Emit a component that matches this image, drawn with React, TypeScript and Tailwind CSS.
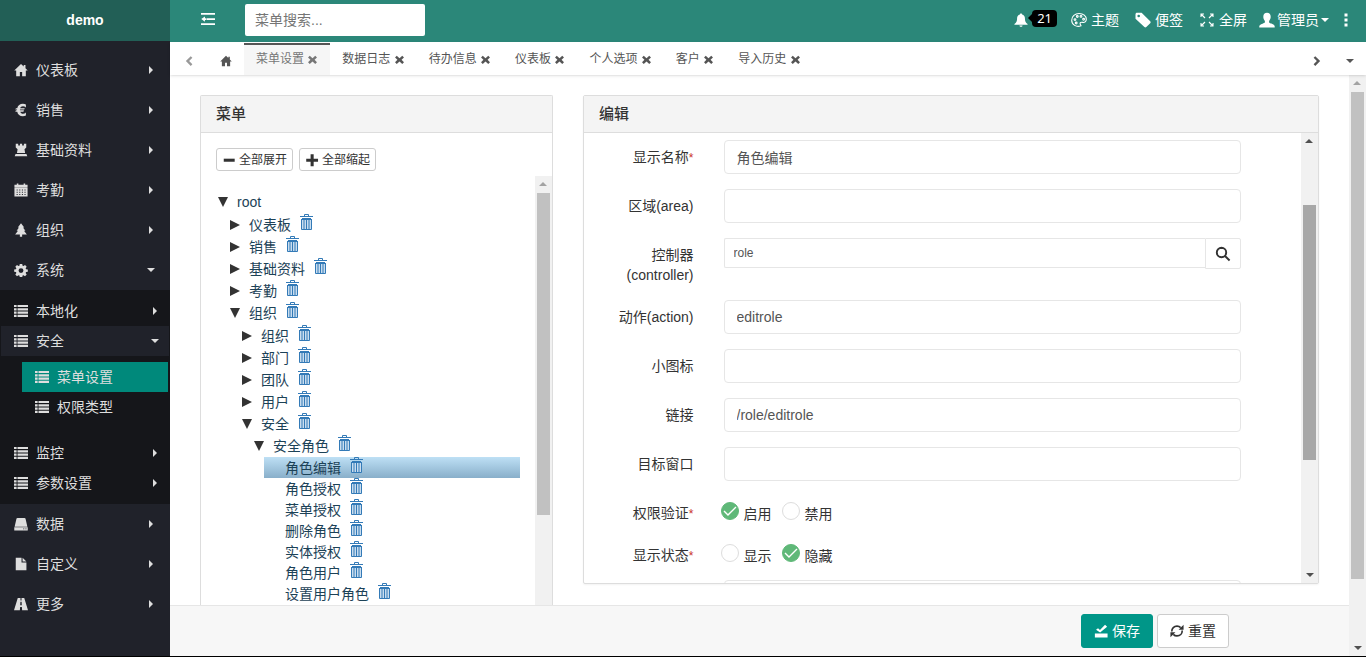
import { useState } from "react";
import type { ReactNode } from "react";
import clsx from "clsx";

const icons: Record<string, ReactNode> = {
  home: (
    <path d="M8 1 .3 8.6h2.2V15h4.2v-4.6h2.6V15h4.2V8.6h2.2l-2.600-2.500V2.400h-2v1.700z" />
  ),
  euro: (
    <path d="M13.6 1.8v3.4c-1-1-2.2-1.5-3.4-1.5-1.6 0-2.7.8-3.1 2.2h5.2l-.6 1.5H6.8v1h4.6l-.6 1.5H7.2c.5 1.5 1.6 2.4 3.2 2.4 1.2 0 2.3-.5 3.2-1.4v3.3c-1 .6-2.2.9-3.5.9-3.4 0-5.8-2-6.4-5.2H1.500l.7-1.5h1.300v-1h-2l.7-1.5h1.500C4.400 2.900 6.800.9 10.200.9c1.300 0 2.500.3 3.400.9z" />
  ),
  tower: (
    <path d="M2 .8h2.800v2h2V.8h2.500v2h2V.8H14v4.400L12 7l.7 4.500H3.400L4.100 7 2 5.200zM1.800 12.500h12.400l1 2.700H.8z" />
  ),
  calendar: (
    <path
      fillRule="evenodd"
      d="M.5 2h2.700V.5H5V2h6V.5h1.800V2h2.700v3H.5zM.5 5.500h15v10H.5zM3 7.500v1h1.200v-1zm3 0v1h1.200v-1zm3 0v1h1.200v-1zm3 0v1h1.200v-1zM3 10v1h1.200v-1zm3 0v1h1.200v-1zm3 0v1h1.200v-1zm3 0v1h1.200v-1zm-9 2.600v1h1.200v-1zm3 0v1h1.200v-1zm3 0v1h1.200v-1zm3 0v1h1.200v-1z"
    />
  ),
  tree: <path d="M8 .3 4.300 5.200h1.400L3 8.800h1.600L1.300 13h5.400v2.700h2.600V13h5.400l-3.300-4.200H13l-2.700-3.600h1.400z" />,
  cog: (
    <path
      fillRule="evenodd"
      d="M6.600 1h2.800l.4 2 1.100.5 1.700-1.200 1.900 1.900-1.200 1.700.5 1.100 2 .4v2.600l-2 .4-.5 1.100 1.200 1.700-1.900 1.900-1.700-1.200-1.100.5-.4 2H6.600l-.4-2-1.100-.5-1.700 1.200-1.900-1.900 1.200-1.700-.5-1.100-2-.4V7.400l2-.4.5-1.100-1.200-1.700 1.900-1.900 1.700 1.200L6.200 3zM8 5.900a2.800 2.800 0 1 0 0 5.600 2.800 2.800 0 0 0 0-5.600z"
    />
  ),
  list: (
    <path d="M0 1h3v2.500H0zM4 1h12v2.500H4zM0 4.800h3v2.500H0zM4 4.800h12v2.500H4zM0 8.600h3v2.500H0zM4 8.600h12v2.500H4zM0 12.400h3v2.500H0zM4 12.400h12v2.500H4z" />
  ),
  hdd: (
    <path
      fillRule="evenodd"
      d="M4 1h8c.7 0 1 .3 1.200.9L15.300 11H.7L2.800 1.900C3 1.300 3.300 1 4 1zM.3 11.700h15.400v3.600H.3zM10.500 13v1h1.300v-1zm2.500 0v1h1.300v-1z"
    />
  ),
  file: <path d="M2 .8h6.600v5.400h5.600v9H2zM9.800.8l4.400 4.300H9.800z" />,
  road: (
    <path d="M4.300 1h3.100v3h1.200V1h3.100L16 15H9.300l-.3-3.600H7L6.700 15H0zM7.300 5.500 7.100 9.500h1.800l-.2-4z" fillRule="evenodd" />
  ),
  bell: (
    <path d="M8 .5c.9 0 1.300.6 1.300 1.300 2.100.6 3.200 2.300 3.200 4.500 0 3.200.8 4.600 3 6.300v.8H.5v-.8c2.200-1.700 3-3.100 3-6.300 0-2.200 1.100-3.900 3.200-4.500C6.700 1.100 7.100.5 8 .5zM6.200 14.200h3.600c0 1-.8 1.600-1.800 1.600s-1.800-.6-1.800-1.600z" />
  ),
  tag: (
    <path
      fillRule="evenodd"
      d="M.5 2.200c0-.9.6-1.500 1.500-1.500h4.600L15.200 9.300c.6.6.6 1.300 0 1.900l-3.900 3.900c-.6.6-1.300.6-1.900 0L.5 6.800zM3.700 2.700a1.300 1.300 0 1 0 0 2.600 1.300 1.300 0 0 0 0-2.600z"
    />
  ),
  user: (
    <path d="M8 .8c2.300 0 3.700 1.600 3.700 4 0 1.600-.6 3.200-1.600 4.100v1.500c.4.800 5.400 1.600 5.600 3.800v1.300H.3v-1.300c.2-2.200 5.200-3 5.600-3.800V8.900C4.900 8 4.300 6.400 4.300 4.800c0-2.400 1.400-4 3.700-4z" />
  ),
  palette: (
    <g fill="none" stroke="currentColor" strokeWidth="1.1">
      <path d="M10 13.800c-4.600 1.700-9.300-1-9.300-5.600C.7 4.200 4 1.500 8.100 1.500c4.200 0 7.200 2.500 7.200 5.700 0 2.400-1.800 3.700-3.600 3.200-1.600-.4-2.900.2-2.600 1.500.2.800.9 1 .9 1.900z" />
      <circle cx="4" cy="7.600" r=".9" />
      <circle cx="6.300" cy="4.500" r=".9" />
      <circle cx="10" cy="4.400" r=".9" />
      <circle cx="12.600" cy="7.300" r=".9" />
      <circle cx="5.200" cy="11" r=".9" />
    </g>
  ),
  fullscreen: (
    <path
      d="M5 2H2v3M2 2l4 4M11 2h3v3M14 2l-4 4M2 11v3h3M2 14l4-4M14 11v3h-3M14 14l-4-4"
      fill="none"
      stroke="currentColor"
      strokeWidth="1.1"
    />
  ),
  outdent: (
    <path d="M0 1.200h16v2H0zM6.500 7h9.500v2H6.500zM0 12.800h16v2H0zM.3 8l4.200-3v2H6v2H4.500v2z" />
  ),
  remove: <path d="M4 2.500 8 6l4-3.500L14.500 5 11 8.500l3.500 3.500-2.500 2.500L8 11l-4 3.500L1.500 12 5 8.500 1.500 5z" />,
  left: <path d="M10.300 1.500 12.500 3.700 8.200 8l4.300 4.300-2.200 2.200L3.800 8z" />,
  right: <path d="M5.700 1.500 3.500 3.700 7.800 8l-4.300 4.300 2.200 2.200L12.200 8z" />,
  minus: <path d="M2 6.500h12.500V10H2z" />,
  plus: <path d="M6.400 1.500h3.500v5h5V10h-5v5H6.400v-5h-5V6.500h5z" />,
  search: (
    <path d="M6.500 1.800a4.700 4.700 0 1 0 0 9.400 4.700 4.700 0 0 0 0-9.400zM10 10l4.600 4.500" fill="none" stroke="currentColor" strokeWidth="1.9" />
  ),
  save: <path d="M1 10.800h14.500v4.500H1zM2.300 6.700 4.600 4.900l2.200 1.900L12.600.8l2.400 2.400-8 6.600z" />,
  refresh: (
    <g>
      <path d="M2 8.600c0-3.700 2.600-6.200 6-6.200 1.700 0 3.200.7 4.200 1.800M14 7.400c0 3.700-2.600 6.200-6 6.200-1.700 0-3.200-.7-4.200-1.800" fill="none" stroke="currentColor" strokeWidth="1.900" />
      <path d="M15.500.8v5.700H9.800zM.5 15.200V9.500h5.700z" />
    </g>
  ),
};

const Icon = ({ name, className = "size-3.5" }: { name: string; className?: string }) => (
  <svg viewBox="0 0 16 16" fill="currentColor" className={clsx("inline-block shrink-0", className)} aria-hidden="true">
    {icons[name]}
  </svg>
);

const CaretDown = () => (
  <svg viewBox="0 0 8 4" className="w-2 h-1 shrink-0" fill="currentColor" aria-hidden="true">
    <path d="M0 0h8L4 4z" />
  </svg>
);

const CaretRight = () => (
  <svg viewBox="0 0 8 8" className="size-2 shrink-0" fill="currentColor" aria-hidden="true">
    <path d="M2 0v8l4-4z" />
  </svg>
);

const Trash = () => (
  <svg viewBox="0 0 13 16" className="w-[13px] h-4" fill="none" stroke="#337ab7" aria-hidden="true">
    <path d="M4.500 2.500v-2h4v2M0 2.500h13" />
    <path d="M1.500 5v10.500h10V5" fill="#c9ddef" />
    <path d="M2 5h9" strokeWidth="2" />
    <path d="M4 6v9M6.500 6v9M9 6v9" strokeWidth="1" />
  </svg>
);

type ScrollbarProps = { start: number; size: number; dark?: boolean; atTop?: boolean };

const Scrollbar = ({ start, size, dark, atTop }: ScrollbarProps) => (
  <div className="flex flex-col w-[17px] shrink-0 bg-[#f1f1f1]" aria-hidden="true">
    <div className={clsx("flex items-center justify-center h-[17px] shrink-0 rotate-180", atTop ? "text-[#a3a3a3]" : "text-[#505050]")}>
      <CaretDown />
    </div>
    <div className="flex-1 px-0.5">
      <div style={{ height: `${start}%` }} />
      <div className={dark ? "bg-[#a8a8a8]" : "bg-[#c1c1c1]"} style={{ height: `${size}%` }} />
    </div>
    <div className="flex items-center justify-center h-[17px] shrink-0 text-[#505050]">
      <CaretDown />
    </div>
  </div>
);

const menuTop = [
  { icon: "home", text: "仪表板" },
  { icon: "euro", text: "销售" },
  { icon: "tower", text: "基础资料" },
  { icon: "calendar", text: "考勤" },
  { icon: "tree", text: "组织" },
  { icon: "cog", text: "系统", open: true },
];

const menuBottom = [
  { icon: "hdd", text: "数据" },
  { icon: "file", text: "自定义" },
  { icon: "road", text: "更多" },
];

type MenuItemProps = { icon: string; text: string; open?: boolean };

const MenuItem = ({ icon, text, open }: MenuItemProps) => (
  <a href="#" className="flex items-center gap-2 h-10 pl-3.5 pr-[15px]">
    <Icon name={icon} />
    <span className="flex-1">{text}</span>
    {open ? <CaretDown /> : <CaretRight />}
  </a>
);

const SubItem = ({ text, open }: { text: string; open?: boolean }) => (
  <a href="#" className={clsx("flex items-center gap-2 h-[30px] mx-px pl-[13px] pr-2.5", open && "bg-[#20222a]")}>
    <Icon name="list" />
    <span className="flex-1">{text}</span>
    {open ? <CaretDown /> : <CaretRight />}
  </a>
);

const Sidebar = () => (
  <aside className="w-[170px] shrink-0 flex flex-col bg-[#20222a] text-[#dedede] text-sm">
    <div className="h-[41px] shrink-0 flex items-center justify-center pb-0.5 bg-[#225f56] text-white font-bold">demo</div>
    <nav className="pt-[9px]">
      {menuTop.map((item) => (
        <MenuItem key={item.text} {...item} />
      ))}
      <div className="bg-[#15161a] py-1.5">
        <SubItem text="本地化" />
        <SubItem text="安全" open />
        <div className="pt-1.5 pb-4 pl-[22px] pr-0.5">
          {["菜单设置", "权限类型"].map((text, index) => (
            <a
              key={text}
              href="#"
              className={clsx("flex items-center gap-2 h-[30px] pl-[13px]", index === 0 && "bg-[#00897b]")}
            >
              <Icon name="list" />
              {text}
            </a>
          ))}
        </div>
        <SubItem text="监控" />
        <SubItem text="参数设置" />
      </div>
      {menuBottom.map((item) => (
        <MenuItem key={item.text} {...item} />
      ))}
    </nav>
  </aside>
);

const Header = () => (
  <header className="h-[42px] shrink-0 flex items-center bg-[#2b8779] text-white text-sm">
    <button className="w-[75px] flex justify-center pb-1" aria-label="收起菜单">
      <Icon name="outdent" />
    </button>
    <input
      type="search"
      placeholder="菜单搜索..."
      aria-label="菜单搜索"
      className="w-[180px] h-8 mb-0.5 px-2.5 bg-white rounded-xs text-[#555] placeholder:text-[#757575] outline-none"
    />
    <div className="flex-1 flex items-center justify-end pr-[18px] pb-0.5">
      <button className="flex items-center pr-1.5" aria-label="消息">
        <Icon name="bell" />
        <span className="flex items-center mb-1">
          <svg viewBox="0 0 4 8" className="w-1 h-2" fill="#000" aria-hidden="true">
            <path d="M4 0v8L0 4z" />
          </svg>
          <span className="h-[17px] px-[5px] rounded-sm bg-black text-[13px] leading-[17px] font-['Noto_Sans']">21</span>
        </span>
      </button>
      <a href="#" className="flex items-center gap-1 px-2">
        <Icon name="palette" className="size-4" />
        主题
      </a>
      <a href="#" className="flex items-center gap-1 px-2">
        <Icon name="tag" className="size-4" />
        便签
      </a>
      <a href="#" className="flex items-center gap-1 px-2">
        <Icon name="fullscreen" className="size-4" />
        全屏
      </a>
      <button className="flex items-center gap-0.5 px-1">
        <Icon name="user" className="size-4" />
        管理员
        <CaretDown />
      </button>
      <button className="pl-[11px]" aria-label="更多">
        <svg viewBox="0 0 4 14" className="w-1 h-3.5" fill="currentColor" aria-hidden="true">
          <path d="M.5.5h3v3h-3zM.5 5.500h3v3h-3zM.5 10.500h3v3h-3z" />
        </svg>
      </button>
    </div>
  </header>
);

const tabs = ["菜单设置", "数据日志", "待办信息", "仪表板", "个人选项", "客户", "导入历史"];

const TabBar = () => {
  const [active, setActive] = useState(0);

  return (
    <div className="flex items-stretch h-[33px] shrink-0 bg-white shadow-sm text-xs text-[#555] z-10">
      <button className="w-[37px] flex items-center justify-center pt-1 text-[#999]" aria-label="向左">
        <Icon name="left" className="size-3" />
      </button>
      <button className="w-[37px] flex items-center justify-center pt-1" aria-label="首页">
        <Icon name="home" className="size-3" />
      </button>
      <div className="flex flex-1 pt-px">
        {tabs.map((tab, index) => (
          <button
            key={tab}
            onClick={() => setActive(index)}
            className={clsx(
              "px-3 border-t-2 whitespace-nowrap pb-0.5",
              active === index ? "bg-[#f6f6f6] border-[#555] text-[#777]" : "border-transparent"
            )}
          >
            {tab} <Icon name="remove" className="size-[11px]" />
          </button>
        ))}
      </div>
      <button className="w-[33px] flex items-center justify-center pt-1" aria-label="向右">
        <Icon name="right" className="size-3" />
      </button>
      <button className="w-[33px] flex items-center justify-center pt-1" aria-label="标签操作">
        <CaretDown />
      </button>
    </div>
  );
};

type TreeNode = { text: string; children?: TreeNode[]; open?: boolean };

const folder = (text: string): TreeNode => ({ text, children: [] });

const tree: TreeNode = {
  text: "root",
  open: true,
  children: [
    folder("仪表板"),
    folder("销售"),
    folder("基础资料"),
    folder("考勤"),
    {
      text: "组织",
      open: true,
      children: [
        folder("组织"),
        folder("部门"),
        folder("团队"),
        folder("用户"),
        {
          text: "安全",
          open: true,
          children: [
            {
              text: "安全角色",
              open: true,
              children: [
                { text: "角色编辑" },
                { text: "角色授权" },
                { text: "菜单授权" },
                { text: "删除角色" },
                { text: "实体授权" },
                { text: "角色用户" },
                { text: "设置用户角色" },
              ],
            },
          ],
        },
      ],
    },
  ],
};

const TreeItem = ({ node, depth = 0 }: { node: TreeNode; depth?: number }) => {
  const [open, setOpen] = useState(node.open ?? false);
  const selected = node.text === "角色编辑";

  return (
    <li>
      <div
        className={clsx(
          "flex items-center",
          node.children ? "h-[22px]" : "h-[21px] pl-[21px]",
          selected && "bg-linear-to-b from-[#bee0f5] to-[#89afca]"
        )}
      >
        {node.children && (
          <button className="w-[21px] pl-0.5 text-[#333]" onClick={() => setOpen(!open)} aria-label={node.text}>
            <svg viewBox="0 0 10 10" className="size-2.5" fill="currentColor" aria-hidden="true">
              <path d={open ? "M0 0h10L5 10z" : "M0 0v10l10-5z"} />
            </svg>
          </button>
        )}
        <span className="text-[#1c4257]">{node.text}</span>
        {depth > 0 && (
          <a href="#" className="ml-[9px] mb-1.5" aria-label={`删除 ${node.text}`}>
            <Trash />
          </a>
        )}
      </div>
      {open && node.children && (
        <ul className={clsx("pl-3", depth < 2 && "pt-px")}>
          {node.children.map((child) => (
            <TreeItem key={child.text} node={child} depth={depth + 1} />
          ))}
        </ul>
      )}
    </li>
  );
};

const smallBtn =
  "flex items-center gap-[3px] h-[23px] px-[5px] border border-[#ccc] rounded-[3px] bg-white text-xs text-[#333]";

const panelTitle =
  "h-[37px] shrink-0 px-[15px] leading-9 bg-[#f4f4f4] border-b border-[#ddd] text-[15px] font-medium text-[#333]";

const MenuPanel = () => (
  <section className="flex flex-col min-h-0 border border-b-0 border-[#ddd] rounded-t-xs bg-white">
    <h2 className={panelTitle}>菜单</h2>
    <div className="flex gap-1.5 px-[15px] pt-[15px] pb-[5px]">
      <button className={smallBtn}>
        <Icon name="minus" />
        全部展开
      </button>
      <button className={smallBtn}>
        <Icon name="plus" />
        全部缩起
      </button>
    </div>
    <div className="flex-1 min-h-0 flex overflow-hidden">
      <ul className="flex-1 px-[15px] pt-[15px] text-sm">
        <TreeItem node={tree} />
      </ul>
      <div className="w-[17px] shrink-0 bg-[#f1f1f1] text-[#a3a3a3]" aria-hidden="true">
        <div className="flex items-center justify-center h-[17px] rotate-180">
          <CaretDown />
        </div>
        <div className="h-3/4 mx-0.5 bg-[#c1c1c1]" />
      </div>
    </div>
  </section>
);

const labelClass = "col-span-2 px-[15px] pt-[7px] text-right leading-5";
const inputClass =
  "block w-full h-[34px] px-3 border border-[#e6e6e6] rounded-sm bg-white text-sm text-[#555] outline-none";

const Required = () => <span className="text-[#c9302c] text-xs">*</span>;

type FieldProps = { id: string; label: string; value?: string; required?: boolean };

const Field = ({ id, label, value = "", required }: FieldProps) => (
  <div className="grid grid-cols-12 mb-[15px]">
    <label htmlFor={id} className={labelClass}>
      {label}
      {required && <Required />}
    </label>
    <div className="col-span-10 px-[15px]">
      <input id={id} type="text" defaultValue={value} className={inputClass} />
    </div>
  </div>
);

type RadioFieldProps = { name: string; label: string; options: string[]; selected: string };

const RadioField = ({ name, label, options, selected }: RadioFieldProps) => {
  const [value, setValue] = useState(selected);

  return (
    <div className="grid grid-cols-12 h-[27px] mb-[15px]" role="radiogroup" aria-label={label}>
      <span className={labelClass}>
        {label}
        <Required />
      </span>
      <div className="col-span-10 flex items-start gap-2.5 px-3 pt-1.5">
        {options.map((option) => (
          <label key={option} className="flex items-start gap-[5px] leading-6">
            <span className="grid size-[18px] place-items-center">
              <input
                type="radio"
                name={name}
                checked={value === option}
                onChange={() => setValue(option)}
                className="col-start-1 row-start-1 appearance-none size-[18px] rounded-full border border-[#ddd] bg-white checked:border-[#5fb878] checked:bg-[#5fb878]"
              />
              <svg
                viewBox="0 0 14 14"
                className="col-start-1 row-start-1 size-3.5 pointer-events-none"
                fill="none"
                stroke="#fff"
                strokeWidth="1.4"
                aria-hidden="true"
              >
                <path d="M1 7l4 4 8-8" />
              </svg>
            </span>
            {option}
          </label>
        ))}
      </div>
    </div>
  );
};

const EditPanel = () => (
  <section className="col-span-2 flex flex-col min-h-0 mb-[21px] border border-[#ddd] rounded-xs bg-white shadow-xs">
    <h2 className={panelTitle}>编辑</h2>
    <div className="flex-1 min-h-0 flex overflow-hidden">
      <form className="flex-1 pt-[7px] pl-[15px] pr-[45px] text-sm text-[#333]">
        <Field id="name" label="显示名称" value="角色编辑" required />
        <Field id="area" label="区域(area)" />
        <div className="grid grid-cols-12 mb-[15px]">
          <label htmlFor="controller" className={labelClass}>
            控制器(controller)
          </label>
          <div className="col-span-10 px-[15px] flex items-start">
            <input
              id="controller"
              type="text"
              defaultValue="role"
              className="flex-1 h-[30px] px-[9px] border border-r-0 border-[#e6e6e6] rounded-l-xs bg-white text-xs text-[#555] outline-none"
            />
            <button
              type="button"
              aria-label="查找"
              className="w-9 h-[31px] flex items-center justify-center border border-[#e6e6e6] rounded-r-xs"
            >
              <Icon name="search" className="size-4" />
            </button>
          </div>
        </div>
        <Field id="action" label="动作(action)" value="editrole" />
        <Field id="icon" label="小图标" />
        <Field id="link" label="链接" value="/role/editrole" />
        <Field id="target" label="目标窗口" />
        <RadioField name="auth" label="权限验证" options={["启用", "禁用"]} selected="启用" />
        <RadioField name="visible" label="显示状态" options={["显示", "隐藏"]} selected="隐藏" />
        <Field id="order" label="" />
      </form>
      <Scrollbar start={13.2} size={61.3} dark />
    </div>
  </section>
);

const Footer = () => (
  <footer className="h-[51px] shrink-0 flex items-center justify-end gap-1 pr-[120px] bg-[#f7f7f7] border-t border-[#e6e6e6] text-sm">
    <button className="flex items-center gap-1 h-[34px] px-3 border border-[#009688] rounded-[3px] bg-[#009688] text-white">
      <Icon name="save" />
      保存
    </button>
    <button className="flex items-center gap-1 h-[34px] px-3 border border-[#ccc] rounded-[3px] bg-white text-[#333]">
      <Icon name="refresh" />
      重置
    </button>
  </footer>
);

const App = () => {
  return (
    <div className="h-screen flex overflow-hidden border-b border-black bg-white font-['Liberation_Sans','Noto_Sans_CJK_SC',sans-serif]">
      <Sidebar />
      <div className="flex-1 min-w-0 flex flex-col">
        <Header />
        <TabBar />
        <div className="flex-1 min-h-0 flex">
          <div className="flex-1 min-w-0 flex flex-col">
            <main className="flex-1 min-h-0 grid grid-cols-3 grid-rows-1 gap-[30px] px-[30px] pt-5 overflow-hidden">
              <MenuPanel />
              <EditPanel />
            </main>
            <Footer />
          </div>
          <Scrollbar start={0} size={89} atTop />
        </div>
      </div>
    </div>
  );
};

export default App;
